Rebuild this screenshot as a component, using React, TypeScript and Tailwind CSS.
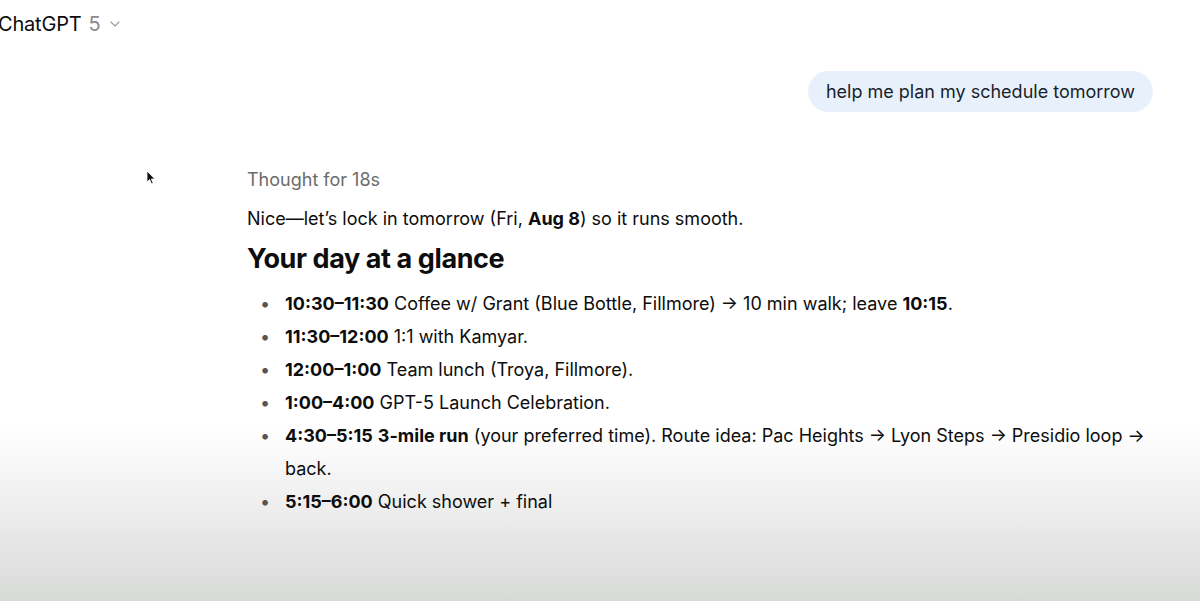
import { ChevronDown } from 'lucide-react';

const items = [
  { time: '10:30–11:30', rest: <>Coffee w/ Grant (Blue Bottle, Fillmore) → 10 min walk; leave <b className="font-bold">10:15</b>.</> },
  { time: '11:30–12:00', rest: <>1:1 with Kamyar.</> },
  { time: '12:00–1:00', rest: <>Team lunch (Troya, Fillmore).</> },
  { time: '1:00–4:00', rest: <>GPT-5 Launch Celebration.</> },
  {
    time: '4:30–5:15',
    rest: (
      <>
        <b className="font-bold">3-mile run</b> (your preferred time). Route idea: Pac Heights → Lyon Steps → Presidio loop → back.
      </>
    ),
  },
  { time: '5:15–6:00', rest: <>Quick shower + final</> },
];

function Cursor() {
  return (
    <svg width="10" height="15" viewBox="0 0 10 15" className="absolute left-[146px] top-[170px]">
      <path d="M1 1 L1 12 L3.6 9.6 L5.6 13.8 L7.2 13 L5.3 9 L8.8 9 Z" fill="#111" stroke="#fff" strokeWidth="0.8" />
    </svg>
  );
}

export default function App() {
  return (
    <div
      className="relative h-[601px] w-full overflow-hidden bg-linear-to-b from-white from-[71%] to-[#d8dad8] text-[#0d0d0d]"
      style={{ fontFamily: 'Inter, "Noto Sans", sans-serif' }}
    >
      <header className="flex h-[50px] items-start pt-[10px]">
        <div className="ml-[-2px] flex items-center gap-[7px] text-[20px] leading-[28px] tracking-[-0.2px]">
          <span>ChatGPT</span>
          <span className="text-[#8a8a8a]">5</span>
          <ChevronDown className="h-[16px] w-[16px] text-[#9a9a9a]" strokeWidth={1.6} />
        </div>
      </header>

      <div className="flex justify-end pr-[47px] pt-[21px]">
        <div className="flex h-[41px] items-center rounded-full bg-[#e8f1fb] px-[18px] text-[18px] text-[#1a1f2b]">
          help me plan my schedule tomorrow
        </div>
      </div>

      <Cursor />

      <main className="pl-[247px] pr-[40px] pt-[56px] text-[18px]">
        <p className="leading-[24px] text-[#6b6b6b]">Thought for 18s</p>
        <p className="mt-[14px] leading-[26px]">
          Nice—let’s lock in tomorrow (Fri, <b className="font-bold">Aug 8</b>) so it runs smooth.
        </p>
        <h2 className="mt-[10px] text-[27px] font-bold leading-[34px] tracking-[-0.4px]">Your day at a glance</h2>
        <ul className="mt-[11px]">
          {items.map(it => (
            <li key={it.time} className="flex leading-[33px]">
              <span className="w-[38px] shrink-0 pl-[13px] text-[#555]">•</span>
              <span>
                <b className="font-bold">{it.time}</b> {it.rest}
              </span>
            </li>
          ))}
        </ul>
      </main>
    </div>
  );
}
